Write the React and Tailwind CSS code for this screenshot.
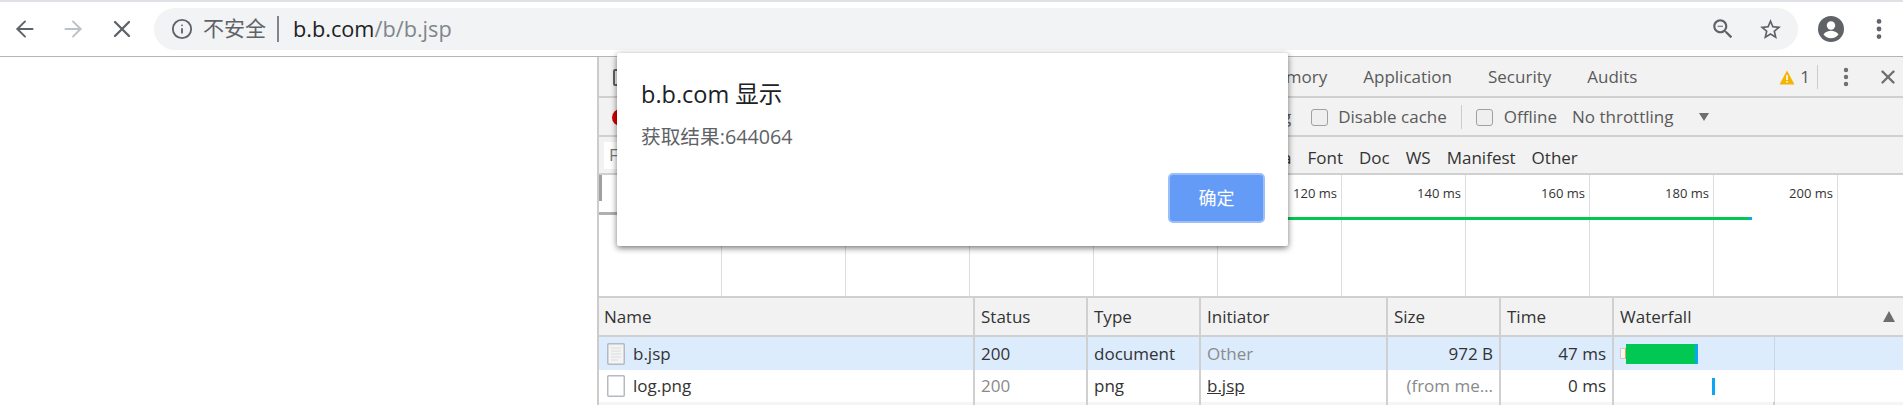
import { ArrowLeft, ArrowRight, X, Info, MoreVertical } from "lucide-react";

const uiFont = "font-['Open_Sans','Noto_Sans_CJK_SC',sans-serif]";
const ticks = ["", "", "", "", "", "120 ms", "140 ms", "160 ms", "180 ms", "200 ms"];

function Column({ width, last, align, className = "px-[6px]", children }) {
  return (
    <div
      className={`flex h-full shrink-0 items-center ${last ? "" : "border-r-2 border-[#d0d0d0]"} ${align === "right" ? "justify-end" : ""} ${className}`}
      style={{ width }}
    >
      {children}
    </div>
  );
}

function PageIcon({ lines }) {
  return (
    <svg width="18" height="22" viewBox="0 0 18 22" className="mr-[8px] shrink-0">
      <rect x="0.75" y="0.75" width="16.5" height="20.5" rx="1" fill={lines ? "#f4f4f4" : "#fff"} stroke="#b3bac2" strokeWidth="1.5" />
      {lines && <path d="M4 5h10M4 8h10M4 11h10M4 14h10M4 17h7" stroke="#dcdcdc" strokeWidth="1.2" />}
    </svg>
  );
}

function Checkbox({ className }) {
  return <span className={`block h-[17px] w-[17px] shrink-0 rounded-[3px] border border-[#a0a0a0] bg-[#efefef] ${className}`} />;
}

function Dialog() {
  return (
    <div className="absolute left-[617px] top-[53px] flex h-[193px] w-[671px] flex-col rounded-[2px] bg-white pl-[24px] pr-[23px] shadow-[0_2px_6px_rgba(0,0,0,0.55)]">
      <div className="mt-[25px] text-[23.5px] leading-[32px] text-[#202124]">b.b.com 显示</div>
      <div className="mt-[14px] text-[19.7px] leading-[26px] text-[#5f6368]">获取结果:644064</div>
      <div className="mt-[23px] flex justify-end">
        <div className="flex h-[50px] w-[97px] items-center justify-center rounded-[5px] border-2 border-[#9dbff9] bg-[#649bf7] text-[18px] text-white">确定</div>
      </div>
    </div>
  );
}

export default function App() {
  return (
    <div className={`relative h-[405px] w-[1903px] overflow-hidden bg-white ${uiFont}`}>
      <div className="h-[2px] bg-[#dee1e6]" />

      <div className="flex h-[55px] items-center border-b border-[#b5b5b5] bg-white">
        <div className="flex w-[154px] shrink-0 items-center">
          <ArrowLeft size={26} strokeWidth={1.8} className="ml-[12px] text-[#5f6368]" />
          <ArrowRight size={26} strokeWidth={1.8} className="ml-[22px] text-[#bdc1c6]" />
          <X size={28} strokeWidth={2} className="ml-[22px] text-[#5f6368]" />
        </div>
        <div className="flex h-[42px] w-[1644px] shrink-0 items-center rounded-full bg-[#f1f3f4] pl-[17px] pr-[15px]">
          <Info size={22} strokeWidth={2} className="text-[#5f6368]" />
          <span className="ml-[10px] text-[21px] text-[#5f6368]">不安全</span>
          <span className="ml-[11px] h-[26px] w-[2px] bg-[#80868b]" />
          <span className="ml-[14px] text-[21.7px] text-[#202124]">b.b.com<span className="text-[#80868b]">/b/b.jsp</span></span>
          <svg width="26" height="26" viewBox="0 0 24 24" fill="#5f6368" className="ml-auto">
            <path d="M15.500 14h-.790l-.280-.270C15.410 12.590 16 11.110 16 9.500 16 5.910 13.090 3 9.500 3S3 5.910 3 9.500 5.910 16 9.500 16c1.610 0 3.090-.590 4.230-1.570l.270.280v.790l5 4.990L20.490 19l-4.990-5zm-6 0C7.010 14 5 11.990 5 9.500S7.010 5 9.500 5 14 7.010 14 9.500 11.990 14 9.500 14zM7 9h5v1H7z" />
          </svg>
          <svg width="25" height="25" viewBox="0 0 24 24" fill="#5f6368" className="ml-[22px]">
            <path d="M22 9.240l-7.190-.620L12 2 9.190 8.630 2 9.240l5.460 4.730L5.820 21 12 17.270 18.180 21l-1.630-7.030L22 9.240zM12 15.400l-3.760 2.270 1-4.280-3.320-2.880 4.380-.380L12 6.100l1.710 4.040 4.380.380-3.320 2.880 1 4.280L12 15.400z" />
          </svg>
        </div>
        <div className="ml-[20px] flex h-[26px] w-[26px] items-center justify-center rounded-full bg-[#5f6368]">
          <svg width="26" height="26" viewBox="0 0 26 26">
            <circle cx="13" cy="9.500" r="4.200" fill="#fff" />
            <path d="M5.500 18.500c1.600-2.600 4.800-3.700 7.500-3.700s5.900 1.100 7.500 3.700c-1.700 2.300-4.500 3.800-7.500 3.800s-5.800-1.500-7.500-3.800z" fill="#fff" />
          </svg>
        </div>
        <MoreVertical size={26} strokeWidth={2.4} className="ml-[22px] text-[#5f6368]" />
      </div>

      <div className="flex h-[348px]">
        <div className="w-[597px] shrink-0 bg-white" />
        <div className="flex min-w-0 flex-1 flex-col border-l-2 border-[#cccccc] text-[17px] text-[#333]">
          <div className="flex h-[41px] shrink-0 items-center border-b-2 border-[#d0d0d0] bg-[#f2f2f2] pt-[1px]">
            <span className="ml-[14px] h-[17px] w-[14px] rounded-[2px] border-2 border-[#5f6368]" />
            <div className="ml-[634px] flex gap-[36px] text-[#5a5a5a]">
              <span>Memory</span>
              <span>Application</span>
              <span>Security</span>
              <span>Audits</span>
            </div>
            <svg width="16" height="15" viewBox="0 0 16 15" className="ml-auto">
              <path d="M8 0.500L15.500 14.500H0.500Z" fill="#f4b400" />
              <path d="M7.200 5h1.600v5h-1.600zM7.200 11h1.600v1.600h-1.600z" fill="#fff" />
            </svg>
            <span className="ml-[5px] text-[#5a5a5a]">1</span>
            <span className="ml-[7px] h-[24px] w-px bg-[#cccccc]" />
            <MoreVertical size={24} strokeWidth={2.4} className="ml-[16px] text-[#6e6e6e]" />
            <X size={22} strokeWidth={2.6} className="ml-[19px] mr-[4px] text-[#6e6e6e]" />
          </div>

          <div className="flex h-[39px] shrink-0 items-center border-b-2 border-[#d0d0d0] bg-[#f2f2f2] pt-[1px] text-[#5a5a5a]">
            <span className="ml-[13px] h-[17px] w-[17px] rounded-full bg-[#d40000]" />
            <span className="ml-[653px]">g</span>
            <Checkbox className="ml-[20px]" />
            <span className="ml-[10px]">Disable cache</span>
            <span className="ml-[14px] h-[24px] w-px bg-[#cccccc]" />
            <Checkbox className="ml-[14px]" />
            <span className="ml-[11px]">Offline</span>
            <span className="ml-[15px]">No throttling</span>
            <span className="ml-[26px] h-0 w-0 border-x-[5px] border-t-[8px] border-x-transparent border-t-[#6e6e6e]" />
          </div>

          <div className="flex h-[38px] shrink-0 items-center border-b-2 border-[#d0d0d0] bg-[#f2f2f2] text-[#333]">
            <span className="ml-[5px] flex h-[27px] w-[20px] items-center bg-white pl-[5px] text-[#777]">F</span>
            <div className="ml-[658px] flex gap-[16px] pt-[5px]">
              <span>a</span>
              <span>Font</span>
              <span>Doc</span>
              <span>WS</span>
              <span>Manifest</span>
              <span>Other</span>
            </div>
          </div>

          <div className="relative flex h-[121px] shrink-0 bg-white">
            {ticks.map((label, i) => (
              <div key={i} className={`flex h-full shrink-0 justify-end border-r border-[#dddddd] pr-[4px] pt-[9px] text-[13px] leading-[18px] text-[#333] ${i === 0 ? "w-[123px]" : "w-[124px]"}`}>{label}</div>
            ))}
            <span className="absolute left-[620px] top-[42px] h-[3px] w-[530px] bg-[#00c853]" />
            <span className="absolute left-[1150px] top-[42px] h-[3px] w-[3px] bg-[#0ea5f7]" />
            <span className="absolute left-0 top-0 h-[26px] w-[3px] bg-[#a0a0a0]" />
            <span className="absolute left-0 top-[37px] h-[3px] w-[18px] bg-[#b0b0b0]" />
          </div>

          <div className="flex h-[41px] shrink-0 items-center border-y-2 border-[#d0d0d0] bg-[#f2f2f2]">
            <Column width={376} className="pl-[5px]">Name</Column>
            <Column width={113}>Status</Column>
            <Column width={113}>Type</Column>
            <Column width={187}>Initiator</Column>
            <Column width={113}>Size</Column>
            <Column width={113}>Time</Column>
            <Column width={287} last>
              Waterfall
              <span className="ml-auto h-0 w-0 border-x-[6px] border-b-[11px] border-x-transparent border-b-[#6e6e6e]" />
            </Column>
          </div>

          <div className="flex h-[33px] shrink-0 items-center bg-[#dcecfd]">
            <Column width={376} className="pl-[8px]"><PageIcon lines />b.jsp</Column>
            <Column width={113}>200</Column>
            <Column width={113}>document</Column>
            <Column width={187} className="px-[6px] text-[#8a8a8a]">Other</Column>
            <Column width={113} align="right">972 B</Column>
            <Column width={113} align="right">47 ms</Column>
            <Column width={287} last className="">
              <div className="flex h-full w-[161px] items-center border-r border-[#c8d6e4]">
                <span className="ml-[6px] h-[11px] w-[6px] border border-[#cccccc] border-r-[#e8a33d] bg-[#f6f6f6]" />
                <span className="h-[20px] w-[69px] bg-[#00c853]" />
                <span className="h-[20px] w-[3px] bg-[#0ea5f7]" />
              </div>
            </Column>
          </div>

          <div className="flex h-[32px] shrink-0 items-center bg-white">
            <Column width={376} className="pl-[8px]"><PageIcon />log.png</Column>
            <Column width={113} className="px-[6px] text-[#8a8a8a]">200</Column>
            <Column width={113}>png</Column>
            <Column width={187}><span className="underline">b.jsp</span></Column>
            <Column width={113} align="right" className="px-[6px] text-[#8a8a8a]">(from me…</Column>
            <Column width={113} align="right">0 ms</Column>
            <Column width={287} last className="">
              <div className="flex h-full w-[161px] items-center border-r border-[#dddddd]">
                <span className="ml-[98px] h-[17px] w-[3px] bg-[#0ea5f7]" />
              </div>
            </Column>
          </div>

          <div className="flex flex-1 bg-[#f5f5f5]">
            <Column width={376} />
            <Column width={113} />
            <Column width={113} />
            <Column width={187} />
            <Column width={113} />
            <Column width={113} />
            <Column width={161} />
          </div>
        </div>
      </div>

      <Dialog />
    </div>
  );
}
